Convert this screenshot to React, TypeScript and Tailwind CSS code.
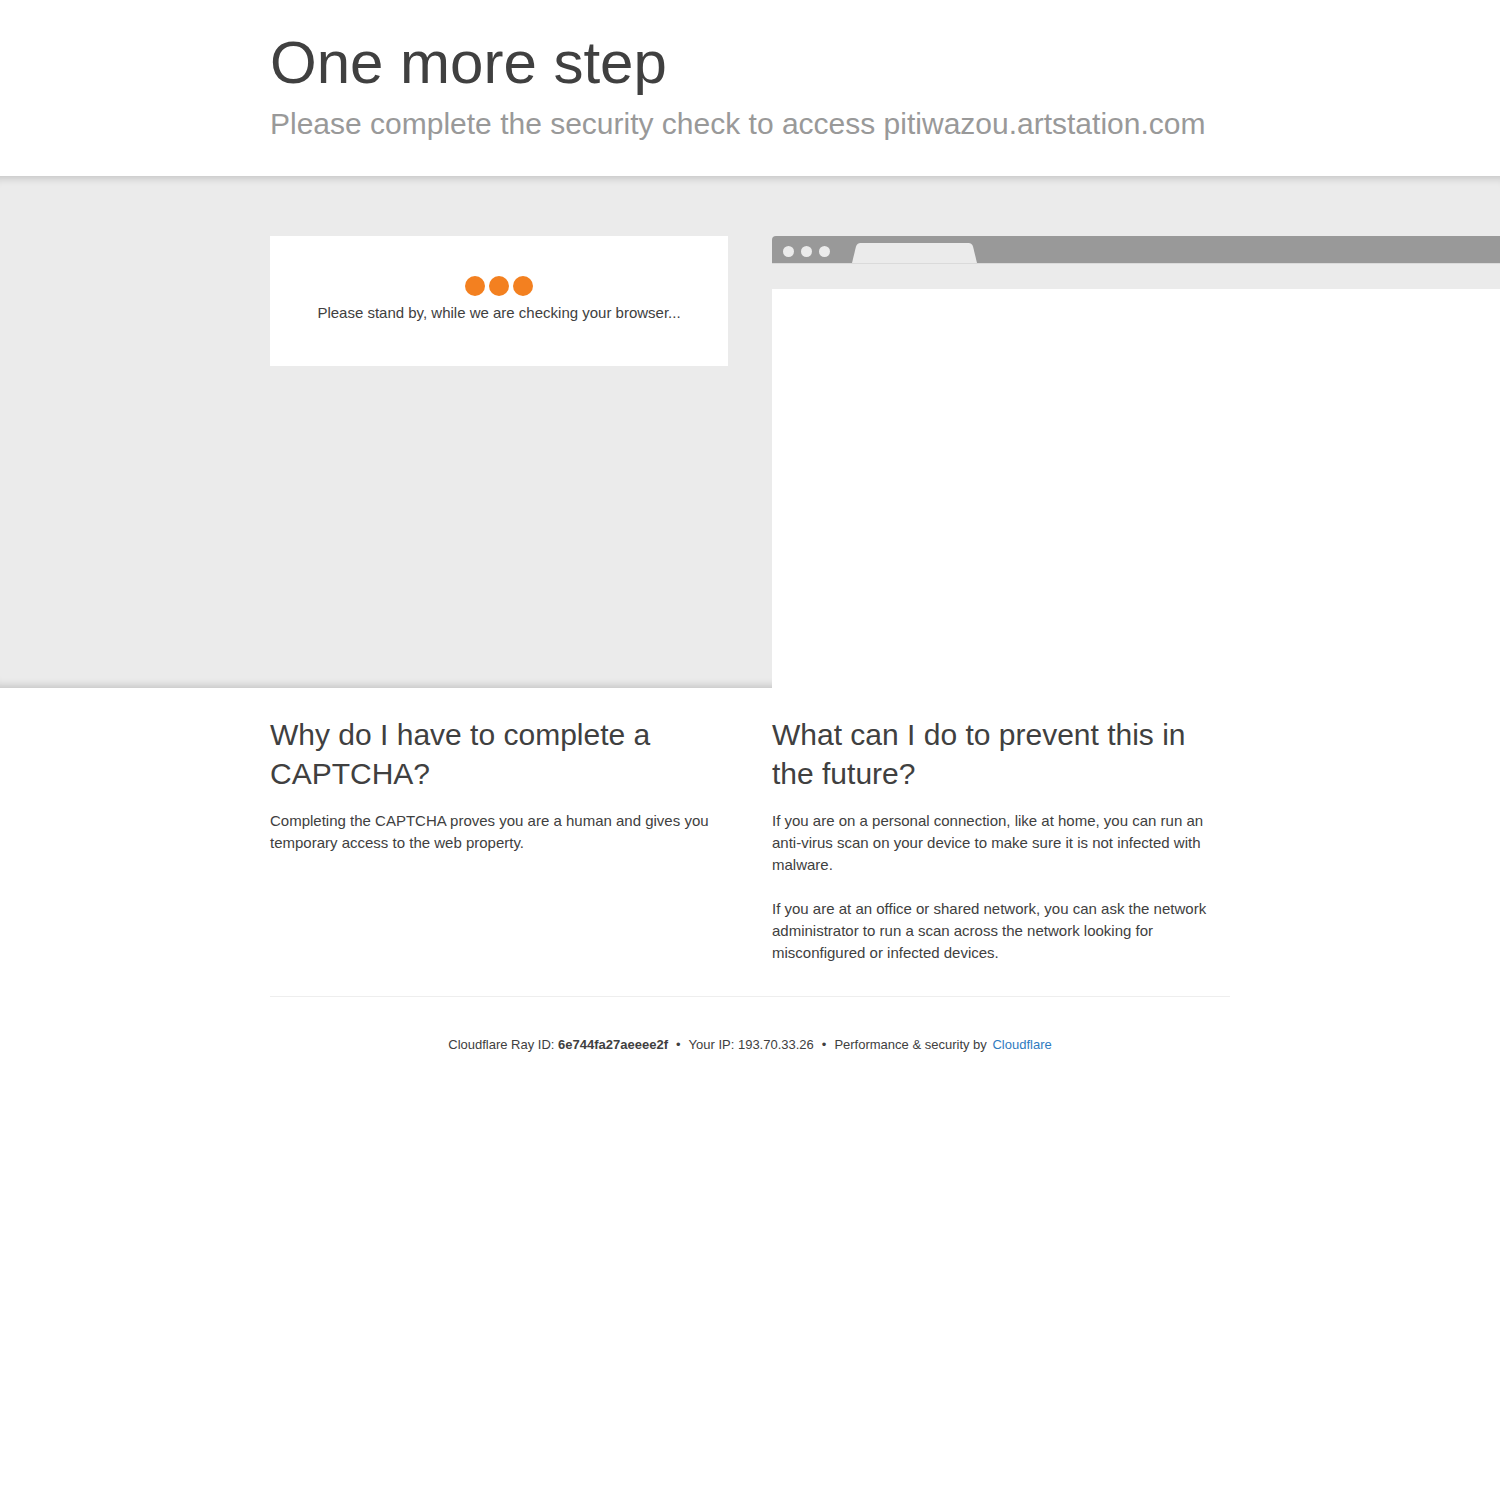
const font = { fontFamily: '"Liberation Sans", Arial, sans-serif' };

const BrowserMockup = () => (
  <div className="w-[728px] shrink-0">
    {/* window bar with dots and a tab */}
    <div className="relative h-[27px] bg-[#999999] rounded-tl-[4px] flex items-start gap-[7px] pl-[11px] pt-[10px]">
      <span className="block w-[11px] h-[11px] rounded-full bg-[#ebebeb]" />
      <span className="block w-[11px] h-[11px] rounded-full bg-[#ebebeb]" />
      <span className="block w-[11px] h-[11px] rounded-full bg-[#ebebeb]" />
      <svg className="absolute left-0 top-0" width="220" height="27" viewBox="0 0 220 27">
        <path d="M80 27 L84 10.5 Q85 7 88.5 7 L196.5 7 Q200 7 201 10.5 L205 27 Z" fill="#ebebeb" />
      </svg>
    </div>
    <div className="h-px bg-[#dadada]" />
    <div className="h-[25px] bg-[#ebebeb]" />
    <div className="h-[399px] bg-white" />
  </div>
);

export default function App() {
  return (
    <div className="min-h-[1500px] bg-white text-[#404040] overflow-hidden" style={font}>
      <header className="pt-[27px] pb-[34px]">
        <div className="w-[960px] mx-auto">
          <h1 className="text-[60px] leading-[72px] font-light text-[#404040]">One more step</h1>
          <h2 className="text-[30px] leading-[36px] font-light text-[#999999] mt-[7px]">
            Please complete the security check to access pitiwazou.artstation.com
          </h2>
        </div>
      </header>

      <section className="bg-[#ebebeb] pt-[60px] shadow-[inset_0_10px_8px_-8px_rgba(0,0,0,0.18),inset_0_-10px_8px_-8px_rgba(0,0,0,0.18)] overflow-hidden">
        <div className="w-[960px] mx-auto flex gap-[44px] items-start">
          <div className="w-[458px] shrink-0 h-[130px] bg-white flex flex-col items-center pt-[40px]">
            <div className="flex gap-[4px]">
              <span className="block w-[20px] h-[20px] rounded-full bg-[#f38020]" />
              <span className="block w-[20px] h-[20px] rounded-full bg-[#f38020]" />
              <span className="block w-[20px] h-[20px] rounded-full bg-[#f38020]" />
            </div>
            <p className="mt-[6px] text-[15px] leading-[22px] text-[#404040]">
              Please stand by, while we are checking your browser...
            </p>
          </div>
          <BrowserMockup />
        </div>
      </section>

      <div className="w-[960px] mx-auto pt-[27px]">
        <div className="flex gap-[44px]">
          <div className="w-[458px]">
            <h2 className="text-[30px] leading-[39px] font-light">Why do I have to complete a CAPTCHA?</h2>
            <p className="mt-[17px] text-[15px] leading-[22px]">
              Completing the CAPTCHA proves you are a human and gives you temporary access to the web property.
            </p>
          </div>
          <div className="w-[458px]">
            <h2 className="text-[30px] leading-[39px] font-light">What can I do to prevent this in the future?</h2>
            <p className="mt-[17px] text-[15px] leading-[22px]">
              If you are on a personal connection, like at home, you can run an anti-virus scan on your device to make sure it is not infected with malware.
            </p>
            <p className="mt-[22px] text-[15px] leading-[22px]">
              If you are at an office or shared network, you can ask the network administrator to run a scan across the network looking for misconfigured or infected devices.
            </p>
          </div>
        </div>

        <footer className="mt-[32px] border-t border-[#eeeeee] pt-[38px] text-center text-[13px] leading-[20px] text-[#404040]">
          <span>
            Cloudflare Ray ID: <strong className="font-bold">6e744fa27aeeee2f</strong>
          </span>
          <span className="mx-[8px]">&bull;</span>
          <span>Your IP: 193.70.33.26</span>
          <span className="mx-[8px]">&bull;</span>
          <span>
            Performance &amp; security by{" "}
            <a href="#" className="ml-[2px] text-[#2f7bbf] no-underline">
              Cloudflare
            </a>
          </span>
        </footer>
      </div>
    </div>
  );
}
